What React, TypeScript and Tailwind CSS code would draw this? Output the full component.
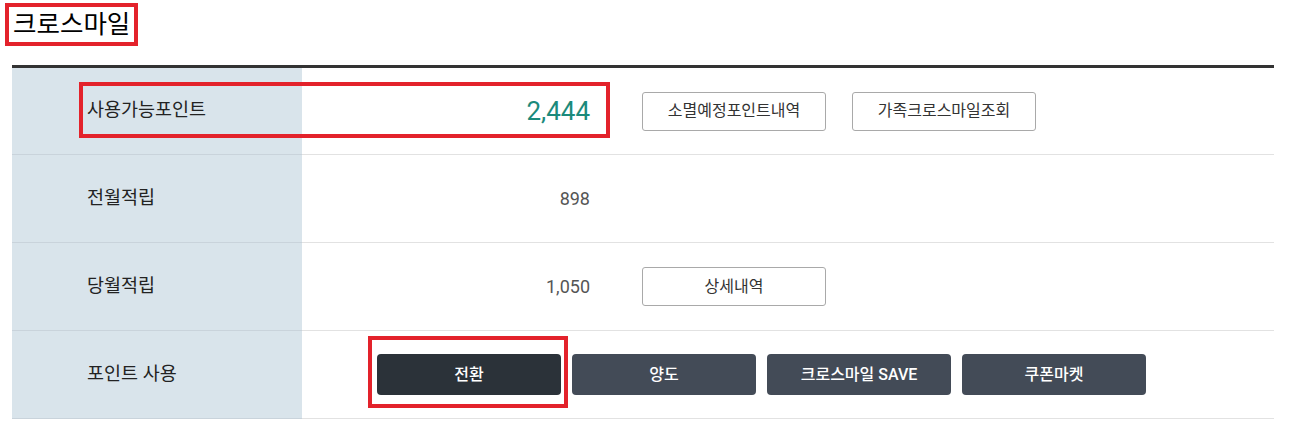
import React from "react";

const FONT = "font-['Roboto','Noto_Sans_CJK_KR',sans-serif]";

const OutlineButton: React.FC<{ label: string }> = ({ label }) => (
  <button className="w-[184px] h-[39px] bg-white border border-[#a9a9a9] rounded-[3px] text-[16px] text-[#333]">
    {label}
  </button>
);

const DarkButton: React.FC<{ label: string; active?: boolean }> = ({ label, active }) => (
  <button
    className={`w-[184px] h-[41px] rounded-[4px] text-[16px] font-medium text-white ${
      active ? "bg-[#2b3239]" : "bg-[#434b57]"
    }`}
  >
    {label}
  </button>
);

const Row: React.FC<{ label: string; first?: boolean; children: React.ReactNode }> = ({
  label,
  first,
  children,
}) => (
  <div className={`flex ${first ? "h-[87px]" : "h-[88px]"}`}>
    <div className="w-[290px] shrink-0 bg-[#d9e4eb] border-b border-[#c9d3db] pl-[75px] flex items-center text-[18.5px] text-[#222]">
      {label}
    </div>
    <div className="flex-1 border-b border-[#e2e2e2] flex items-center">{children}</div>
  </div>
);

const App: React.FC = () => {
  return (
    <div className={`relative w-[1308px] h-[438px] bg-white pt-[3px] ${FONT}`}>
      <div className="pl-[5px]">
        <h2 className="inline-block border-4 border-[#e3222b] pl-[4px] pr-[4px] h-[43px] leading-[35px] text-[25.5px] font-normal text-black">
          크로스마일
        </h2>
      </div>

      <div className="ml-[12px] mt-[19px] w-[1262px] border-t-[3px] border-[#333]">
        <Row label="사용가능포인트" first>
          <div className="w-[288px] text-right text-[26px] text-[#1b8a7b]">2,444</div>
          <div className="ml-[52px] flex gap-[26px]">
            <OutlineButton label="소멸예정포인트내역" />
            <OutlineButton label="가족크로스마일조회" />
          </div>
        </Row>
        <Row label="전월적립">
          <div className="w-[288px] text-right text-[18px] text-[#555]">898</div>
        </Row>
        <Row label="당월적립">
          <div className="w-[288px] text-right text-[18px] text-[#555]">1,050</div>
          <div className="ml-[52px] flex">
            <OutlineButton label="상세내역" />
          </div>
        </Row>
        <Row label="포인트 사용">
          <div className="pl-[75px] flex gap-[11px]">
            <DarkButton label="전환" active />
            <DarkButton label="양도" />
            <DarkButton label="크로스마일 SAVE" />
            <DarkButton label="쿠폰마켓" />
          </div>
        </Row>
      </div>

      {/* annotation boxes */}
      <div className="absolute left-[79px] top-[82px] w-[531px] h-[56px] border-4 border-[#e3222b] pointer-events-none" />
      <div className="absolute left-[368px] top-[336px] w-[200px] h-[72px] border-4 border-[#e3222b] pointer-events-none" />
    </div>
  );
};

export default App;
